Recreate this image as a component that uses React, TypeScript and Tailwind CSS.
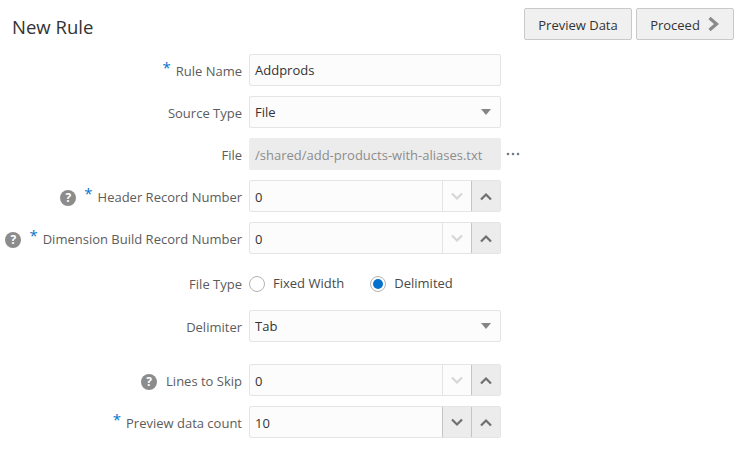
import React from "react";

const font = { fontFamily: '"Open Sans", "Noto Sans", sans-serif' };

function Help() {
  return (
    <span className="flex h-[16px] w-[16px] shrink-0 items-center justify-center rounded-full bg-[#8c8c8c] text-[12px] font-bold leading-none text-white">
      ?
    </span>
  );
}

function Star() {
  return <span className="relative top-[-5px] mr-[5px] text-[15px] leading-none text-[#0572ce]">*</span>;
}

function Label({ text, help, req }: { text: string; help?: boolean; req?: boolean }) {
  return (
    <div className="flex w-[242px] shrink-0 items-center justify-end pt-[4px] text-[13px] text-[#5c5c5c]">
      {help && (
        <span className={req ? "mr-[8px]" : "mr-[9px]"}>
          <Help />
        </span>
      )}
      {req && <Star />}
      <span>{text}</span>
    </div>
  );
}

function Chevron({ up, active }: { up?: boolean; active?: boolean }) {
  return (
    <svg width="14" height="9" viewBox="0 0 14 9" fill="none">
      <path
        d={up ? "M2 7.5 L7 2.5 L12 7.5" : "M2 1.5 L7 6.5 L12 1.5"}
        stroke={active ? "#6f6f6f" : "#d6d6d6"}
        strokeWidth="2.2"
      />
    </svg>
  );
}

function Shell({ children, className = "" }: { children: React.ReactNode; className?: string }) {
  return (
    <div className={`flex h-[32px] w-[252px] items-center rounded-[2px] border border-[#e4e4e4] ${className}`}>{children}</div>
  );
}

function TextField({ value }: { value: string }) {
  return (
    <Shell className="bg-[#fcfcfc] px-[5px] text-[13px] text-[#333333]">
      <span className="pt-[2px]">{value}</span>
    </Shell>
  );
}

function SelectField({ value }: { value: string }) {
  return (
    <Shell className="justify-between bg-[#fcfcfc] pl-[5px] pr-[9px] text-[13px] text-[#333333]">
      <span className="pt-[2px]">{value}</span>
      <svg width="10" height="6" viewBox="0 0 10 6">
        <path d="M0 0 H10 L5 6 Z" fill="#858585" />
      </svg>
    </Shell>
  );
}

function NumberField({ value, downActive }: { value: string; downActive?: boolean }) {
  return (
    <Shell className="bg-[#fcfcfc] text-[13px] text-[#333333]">
      <span className="flex-1 pl-[5px] pt-[3px]">{value}</span>
      <span
        className={`flex h-full w-[29px] items-center justify-center border-l ${
          downActive ? "border-[#c4c4c4] bg-[#ececec]" : "border-[#e4e4e4] bg-[#fcfcfc]"
        }`}
      >
        <Chevron active={downActive} />
      </span>
      <span className="flex h-full w-[29px] items-center justify-center border-l border-[#c4c4c4] bg-[#ececec]">
        <Chevron up active />
      </span>
    </Shell>
  );
}

function Row({ label, children, className = "" }: { label: React.ReactNode; children: React.ReactNode; className?: string }) {
  return (
    <div className={`flex h-[32px] items-center gap-[7px] ${className}`}>
      {label}
      {children}
    </div>
  );
}

function Radio({ checked, label }: { checked?: boolean; label: string }) {
  return (
    <div className="flex items-center gap-[8px]">
      <span className="flex h-[16px] w-[16px] items-center justify-center rounded-full border border-[#b3b3b3] bg-white">
        {checked && <span className="h-[10px] w-[10px] rounded-full bg-[#0572ce]" />}
      </span>
      <span className="text-[13px] text-[#4a4a4a]">{label}</span>
    </div>
  );
}

function Btn({ children, className = "" }: { children: React.ReactNode; className?: string }) {
  return (
    <div className={`flex h-[32px] items-center justify-center gap-[7px] rounded-[2px] border border-[#c9c9c9] bg-[#f0f0f0] text-[13px] text-[#333333] ${className}`}>
      {children}
    </div>
  );
}

export default function App() {
  return (
    <div className="h-[449px] w-[738px] overflow-hidden bg-white" style={font}>
      <div className="flex h-[54px] items-start justify-between pl-[12px] pr-[4px] pt-[8px]">
        <h1 className="mt-[7px] text-[18.5px] leading-[24px] text-[#333333]">New Rule</h1>
        <div className="flex gap-[4px]">
          <Btn className="w-[108px]">
            <span className="pt-[4px]">Preview Data</span>
          </Btn>
          <Btn className="w-[98px]">
            <span className="pt-[4px]">Proceed</span>
            <svg width="13" height="16" viewBox="0 0 13 16" fill="none">
              <path d="M2.5 2 L9.5 8 L2.5 14" stroke="#8a8a8a" strokeWidth="3.2" />
            </svg>
          </Btn>
        </div>
      </div>
      <div className="flex flex-col gap-[10px]">
        <Row label={<Label text="Rule Name" req />}>
          <TextField value="Addprods" />
        </Row>
        <Row label={<Label text="Source Type" />}>
          <SelectField value="File" />
        </Row>
        <Row label={<Label text="File" />}>
          <Shell className="border-[#ececec] bg-[#ececec] px-[5px] text-[13px] text-[#8c8c8c]">
            <span className="pt-[3px]">/shared/add-products-with-aliases.txt</span>
          </Shell>
          <svg width="14" height="4" viewBox="0 0 14 4" className="ml-[-2px]">
            <circle cx="2" cy="2" r="1.3" fill="#6f7a85" />
            <circle cx="7" cy="2" r="1.3" fill="#6f7a85" />
            <circle cx="12" cy="2" r="1.3" fill="#6f7a85" />
          </svg>
        </Row>
        <Row label={<Label text="Header Record Number" help req />}>
          <NumberField value="0" />
        </Row>
        <Row label={<Label text="Dimension Build Record Number" help req />}>
          <NumberField value="0" />
        </Row>
        <Row label={<Label text="File Type" />} className="mt-[3px]">
          <div className="flex gap-[26px] pt-[2px]">
            <Radio label="Fixed Width" />
            <Radio checked label="Delimited" />
          </div>
        </Row>
        <Row label={<Label text="Delimiter" />} className="mt-[1px]">
          <SelectField value="Tab" />
        </Row>
        <Row label={<Label text="Lines to Skip" help />} className="mt-[12px]">
          <NumberField value="0" />
        </Row>
        <Row label={<Label text="Preview data count" req />}>
          <NumberField value="10" downActive />
        </Row>
      </div>
    </div>
  );
}
